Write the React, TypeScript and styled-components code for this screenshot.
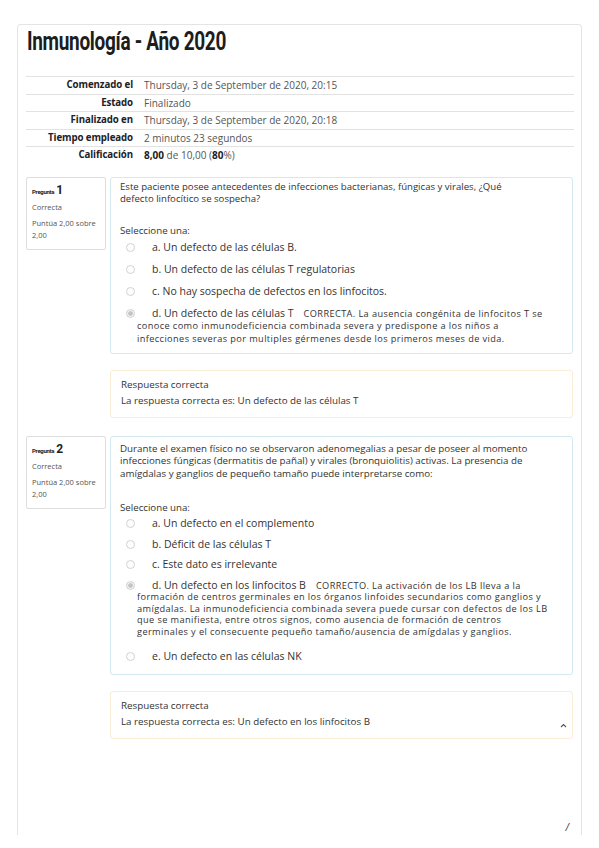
import React from "react";
import styled, { createGlobalStyle } from "styled-components";

const Global = createGlobalStyle`
  html, body { margin: 0; padding: 0; background: #ffffff; }
  body { font-family: "Open Sans", "Noto Sans", sans-serif; color: #333; }
  * { box-sizing: border-box; }
`;

const Card = styled.div`
  margin: 24px 0 0 17px;
  width: 565px;
  height: 811px;
  border: 1px solid #e4e4e4;
  border-bottom: none;
  border-radius: 4px 4px 0 0;
  padding: 0 7px 0 8px;
  display: flex;
  flex-direction: column;
`;

const Title = styled.h1`
  margin: 2px 0 0 1px;
  display: inline-block;
  align-self: flex-start;
  font-family: "Roboto", "Liberation Sans", sans-serif;
  font-weight: 700;
  font-size: 25px;
  line-height: 30px;
  color: #1d1d1d;
  letter-spacing: -0.4px;
  transform: scaleX(0.76);
  transform-origin: left center;
  white-space: nowrap;
`;

const Summary = styled.div`
  margin-top: 19px;
  display: flex;
  flex-direction: column;
`;

const SummaryRow = styled.div`
  display: grid;
  grid-template-columns: 112px 1fr;
  align-items: center;
  min-height: 17.5px;
  border-top: 1px solid #e2e2e2;
  font-size: 10px;
  line-height: 14px;
`;

const SummaryLabel = styled.div`
  text-align: right;
  padding-right: 5px;
  font-weight: 700;
  color: #1d2125;
  font-size: 9.7px;
  letter-spacing: -0.1px;
`;

const SummaryValue = styled.div`
  padding-left: 6px;
  color: #555;
  b { color: #1d2125; }
`;

const Question = styled.div<{ $gap: number }>`
  margin-top: ${(p) => p.$gap}px;
  display: grid;
  grid-template-columns: 80px 1fr;
  column-gap: 4px;
  align-items: start;
  padding-right: 1px;
`;

const Info = styled.div`
  border: 1px solid #dedede;
  border-radius: 2px;
  padding: 4px 5px 8px 5px;
  color: #555;
  font-size: 7.5px;
  line-height: 12px;
`;

const QNumber = styled.div`
  line-height: 16px;
  color: #1d2125;
  font-family: "Roboto", "Liberation Sans", sans-serif;
  font-weight: 700;
  font-size: 6px;
  letter-spacing: -0.3px;
  span { font-size: 12px; letter-spacing: 0; margin-left: 2px; }
`;

const InfoState = styled.div`
  margin-top: 1px;
`;

const InfoGrade = styled.div`
  margin-top: 4px;
`;

const Column = styled.div`
  display: flex;
  flex-direction: column;
`;

const Formulation = styled.div<{ $pt: number; $pb: number }>`
  border: 1px solid #d2e9f1;
  border-radius: 3px;
  padding: ${(p) => p.$pt}px 9px ${(p) => p.$pb}px 9px;
  color: #333;
`;

const QText = styled.p<{ $lh: number; $fs: number }>`
  margin: 0;
  font-size: ${(p) => p.$fs}px;
  line-height: ${(p) => p.$lh}px;
  white-space: nowrap;
`;

const Prompt = styled.div<{ $gap: number }>`
  margin-top: ${(p) => p.$gap}px;
  font-size: 9.7px;
  line-height: 12px;
`;

const Options = styled.div`
  display: flex;
  flex-direction: column;
`;

const Option = styled.div<{ $h: number; $lh: number; $extra: number }>`
  padding: ${(p) => p.$h}px 0 ${(p) => p.$h + p.$extra}px 17px;
  text-indent: -11px;
  font-size: 9.2px;
  line-height: ${(p) => p.$lh}px;
  white-space: nowrap;
`;

const Radio = styled.span<{ $checked?: boolean }>`
  display: inline-block;
  text-indent: 0;
  width: 9px;
  height: 9px;
  border: 1px solid #d2d2d2;
  border-radius: 50%;
  background: #fdfdfd;
  vertical-align: -1px;
  margin-right: 17px;
  ${(p) =>
    p.$checked &&
    `background: radial-gradient(circle, #c4c4c4 0 2px, #f2f2f2 2.5px);`}
`;

const OptLabel = styled.span`
  font-size: 10.5px;
  color: #333;
`;

const OptFeedback = styled.span`
  font-size: 9.2px;
  letter-spacing: 0.4px;
  color: #333;
  margin-left: 10px;
`;

const Outcome = styled.div`
  margin-top: 16px;
  border: 1px solid #fbecd4;
  border-radius: 3px;
  padding: 6px 10px 8px 10px;
  font-size: 9.8px;
  line-height: 16px;
  color: #333;
  display: flex;
  justify-content: space-between;
  align-items: flex-end;
`;

const Chevron = styled.svg`
  width: 7px;
  height: 5px;
  margin: 0 -5px 2px 0;
`;

const Footer = styled.div`
  margin-top: auto;
  display: flex;
  justify-content: flex-end;
  padding: 0 5px 2px 0;
  font-size: 10px;
  font-style: italic;
  color: #333;
  line-height: 12px;
`;

type Opt = { label: string; checked?: boolean; feedback?: React.ReactNode };

type Layout = {
  pt: number;
  pb: number;
  tlh: number;
  tfs: number;
  prompt: number;
  h: number;
  lh: number;
  extra: number;
};

const Q = ({
  n,
  gap,
  text,
  opts,
  layout,
  answer,
  chevron,
}: {
  n: number;
  gap: number;
  text: React.ReactNode;
  opts: Opt[];
  layout: Layout;
  answer: string;
  chevron?: boolean;
}) => (
  <Question $gap={gap}>
    <Info>
      <QNumber>
        Pregunta<span>{n}</span>
      </QNumber>
      <InfoState>Correcta</InfoState>
      <InfoGrade>
        Puntúa 2,00 sobre
        <br />
        2,00
      </InfoGrade>
    </Info>
    <Column>
      <Formulation $pt={layout.pt} $pb={layout.pb}>
        <QText $lh={layout.tlh} $fs={layout.tfs}>
          {text}
        </QText>
        <Prompt $gap={layout.prompt}>Seleccione una:</Prompt>
        <Options>
          {opts.map((o) => (
            <Option
              key={o.label}
              $h={layout.h}
              $lh={layout.lh}
              $extra={o.feedback ? layout.extra : 0}
            >
              <Radio $checked={o.checked} />
              <OptLabel>{o.label}</OptLabel>
              {o.feedback && <OptFeedback>{o.feedback}</OptFeedback>}
            </Option>
          ))}
        </Options>
      </Formulation>
      <Outcome>
        <div>
          Respuesta correcta
          <br />
          {answer}
        </div>
        {chevron && (
          <Chevron viewBox="0 0 7 5">
            <polyline points="1,4 3.5,1.5 6,4" fill="none" stroke="#555" strokeWidth="1.1" />
          </Chevron>
        )}
      </Outcome>
    </Column>
  </Question>
);

export default function App() {
  return (
    <>
      <Global />
      <Card>
        <Title>Inmunología - Año 2020</Title>
        <Summary>
          <SummaryRow>
            <SummaryLabel>Comenzado el</SummaryLabel>
            <SummaryValue>Thursday, 3 de September de 2020, 20:15</SummaryValue>
          </SummaryRow>
          <SummaryRow>
            <SummaryLabel>Estado</SummaryLabel>
            <SummaryValue>Finalizado</SummaryValue>
          </SummaryRow>
          <SummaryRow>
            <SummaryLabel>Finalizado en</SummaryLabel>
            <SummaryValue>Thursday, 3 de September de 2020, 20:18</SummaryValue>
          </SummaryRow>
          <SummaryRow>
            <SummaryLabel>Tiempo empleado</SummaryLabel>
            <SummaryValue>2 minutos 23 segundos</SummaryValue>
          </SummaryRow>
          <SummaryRow>
            <SummaryLabel>Calificación</SummaryLabel>
            <SummaryValue>
              <b>8,00</b> de 10,00 (<b>80</b>%)
            </SummaryValue>
          </SummaryRow>
        </Summary>

        <Q
          n={1}
          gap={13}
          layout={{ pt: 3, pb: 3, tlh: 12, tfs: 9.6, prompt: 20, h: 4.25, lh: 12.5, extra: 0 }}
          text={
            <>
              Este paciente posee antecedentes de infecciones bacterianas, fúngicas y virales, ¿Qué
              <br />
              defecto linfocítico se sospecha?
            </>
          }
          opts={[
            { label: "a. Un defecto de las células B." },
            { label: "b. Un defecto de las células T regulatorias" },
            { label: "c. No hay sospecha de defectos en los linfocitos." },
            {
              label: "d. Un defecto de las células T",
              checked: true,
              feedback: (
                <>
                  CORRECTA. La ausencia congénita de linfocitos T se
                  <br />
                  conoce como inmunodeficiencia combinada severa y predispone a los niños a
                  <br />
                  infecciones severas por multiples gérmenes desde los primeros meses de vida.
                </>
              ),
            },
          ]}
          answer="La respuesta correcta es: Un defecto de las células T"
        />

        <Q
          n={2}
          gap={18}
          layout={{ pt: 6, pb: 7, tlh: 12.5, tfs: 9.75, prompt: 21.5, h: 4.5, lh: 11.5, extra: 5 }}
          text={
            <>
              Durante el examen físico no se observaron adenomegalias a pesar de poseer al momento
              <br />
              infecciones fúngicas (dermatitis de pañal) y virales (bronquiolitis) activas. La presencia de
              <br />
              amígdalas y ganglios de pequeño tamaño puede interpretarse como:
            </>
          }
          opts={[
            { label: "a. Un defecto en el complemento" },
            { label: "b. Déficit de las células T" },
            { label: "c. Este dato es irrelevante" },
            {
              label: "d. Un defecto en los linfocitos B",
              checked: true,
              feedback: (
                <>
                  CORRECTO. La activación de los LB lleva a la
                  <br />
                  formación de centros germinales en los órganos linfoides secundarios como ganglios y
                  <br />
                  amígdalas. La inmunodeficiencia combinada severa puede cursar con defectos de los LB
                  <br />
                  que se manifiesta, entre otros signos, como ausencia de formación de centros
                  <br />
                  germinales y el consecuente pequeño tamaño/ausencia de amígdalas y ganglios.
                </>
              ),
            },
            { label: "e. Un defecto en las células NK" },
          ]}
          answer="La respuesta correcta es: Un defecto en los linfocitos B"
          chevron
        />
        <Footer>/</Footer>
      </Card>
    </>
  );
}
